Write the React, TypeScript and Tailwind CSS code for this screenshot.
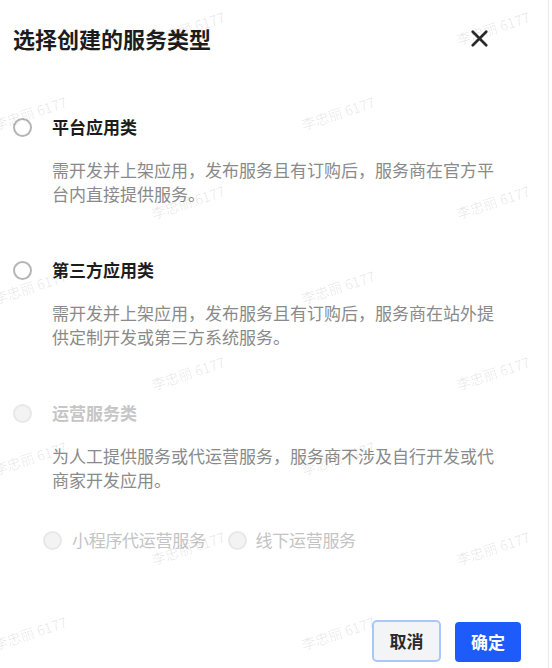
import { X } from 'lucide-react'
import clsx from 'clsx'

type Option = {
  label: string
  desc: string
  disabled?: boolean
}

const OPTIONS: Option[] = [
  {
    label: '平台应用类',
    desc: '需开发并上架应用，发布服务且有订购后，服务商在官方平台内直接提供服务。',
  },
  {
    label: '第三方应用类',
    desc: '需开发并上架应用，发布服务且有订购后，服务商在站外提供定制开发或第三方系统服务。',
  },
  {
    label: '运营服务类',
    desc: '为人工提供服务或代运营服务，服务商不涉及自行开发或代商家开发应用。',
    disabled: true,
  },
]

// watermark centers, staggered grid
const MARKS = [
  [190, 28], [495, 28],
  [32, 113], [340, 113],
  [190, 202], [495, 202],
  [32, 287], [340, 287],
  [190, 373], [495, 373],
  [32, 458], [340, 458],
  [190, 548], [495, 548],
  [32, 633], [340, 633],
]

function Radio({ disabled }: { disabled?: boolean }) {
  return (
    <span
      className={clsx(
        'block w-[19px] h-[19px] rounded-full border-2 shrink-0',
        disabled ? 'border-[#e8e8e8] bg-[#f3f3f3]' : 'border-[#b5b5b5] bg-white'
      )}
    />
  )
}

export default function App() {
  return (
    <div
      className="relative w-[552px] h-[668px] bg-white overflow-hidden flex flex-col"
      style={{ fontFamily: '"Noto Sans CJK SC", "Noto Sans", sans-serif' }}
    >
      {/* Header */}
      <div className="flex items-center justify-between pt-[24px] pl-[13px] pr-[59px]">
        <h1 className="text-[22px] leading-[28px] font-bold text-[#1c1c1c]">
          选择创建的服务类型
        </h1>
        <X className="w-[27px] h-[27px] text-[#2a2a2a]" strokeWidth={2.4} />
      </div>

      {/* Options */}
      <div className="flex flex-col mt-[63px]">
        {OPTIONS.map((item, index) => (
          <div key={index} className={clsx(index > 0 && 'mt-[52px]')}>
            <div className="flex items-center pl-[13px] gap-[20px]">
              <Radio disabled={item.disabled} />
              <span
                className={clsx(
                  'text-[17px] leading-[24px] font-bold',
                  item.disabled ? 'text-[#c6c6c6]' : 'text-[#1c1c1c]'
                )}
              >
                {item.label}
              </span>
            </div>
            <p className="mt-[19px] pl-[52px] w-[504px] text-[17px] leading-[24px] text-[#8a8a8a]">
              {item.desc}
            </p>
          </div>
        ))}

        {/* Sub options */}
        <div className="flex items-center mt-[36px] pl-[43px] text-[17px] leading-[24px] text-[#c4c4c4]">
          <div className="flex items-center gap-[10px]">
            <Radio disabled />
            <span className="tracking-[-0.3px]">小程序代运营服务</span>
          </div>
          <div className="flex items-center gap-[9px] ml-[22px]">
            <Radio disabled />
            <span className="tracking-[-0.3px]">线下运营服务</span>
          </div>
        </div>
      </div>

      {/* Footer */}
      <div className="mt-auto flex items-end justify-end gap-[14px] pr-[31px] pb-[6px]">
        <button className="w-[69px] h-[42px] rounded-[5px] border-2 border-[#aac6fb] bg-[#f3f4f6] text-[17px] font-bold text-[#2a2a2a]">
          取消
        </button>
        <button className="w-[66px] h-[40px] rounded-[4px] bg-[#1d5cfb] text-[17px] font-bold text-white">
          确定
        </button>
      </div>

      {/* right edge */}
      <div className="absolute top-0 right-[3px] w-px h-full bg-[#ececec]" />

      {/* Watermark */}
      {MARKS.map(([x, y], index) => (
        <span
          key={index}
          className="absolute pointer-events-none whitespace-nowrap text-[14px] leading-[20px] text-black/[0.09] -rotate-[18deg]"
          style={{ left: x - 40, top: y - 10 }}
        >
          李忠丽 6177
        </span>
      ))}
    </div>
  )
}
